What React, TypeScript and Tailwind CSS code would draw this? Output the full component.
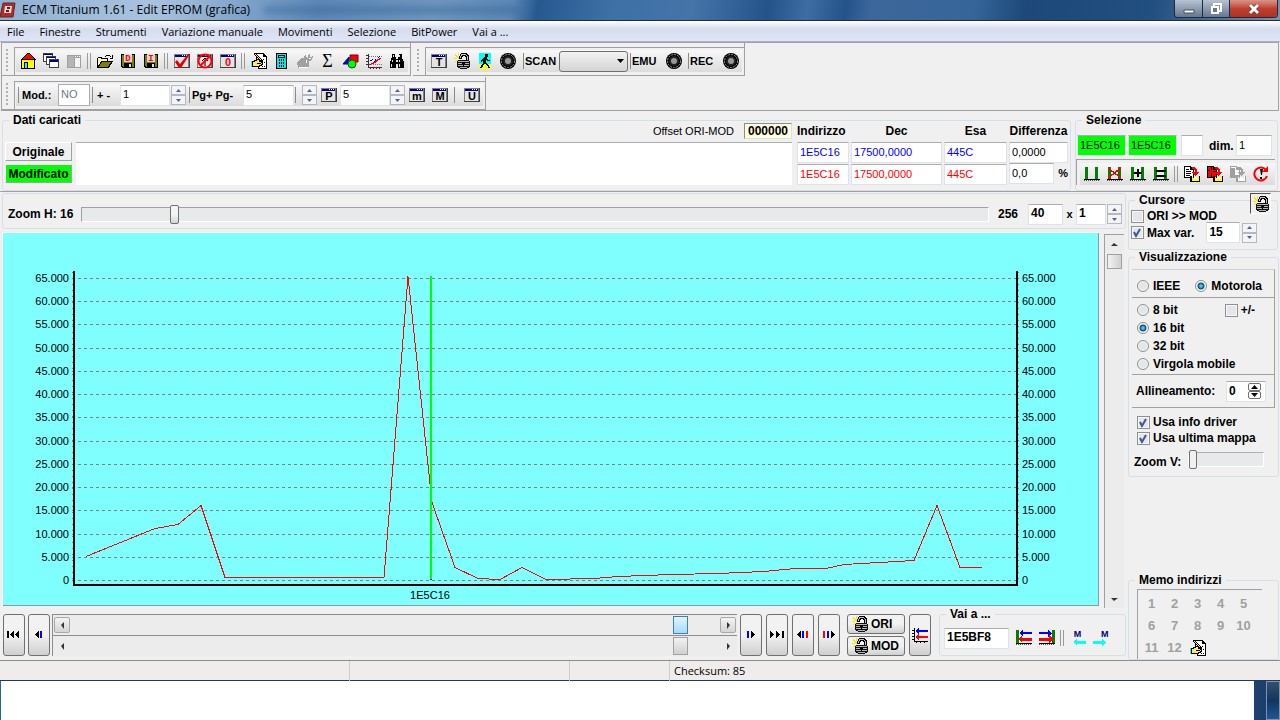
import { ReactNode } from "react";
import clsx from "clsx";

const levels = [65, 60, 55, 50, 45, 40, 35, 30, 25, 20, 15, 10, 5, 0];

const curve =
  "86,557 155,529 178,525 201,506 225,578 384,578 408,277 432,503 455,568 478,579 500,580 522,568 546,580 594,579 618,577 672,575 718,574 764,572 795,569 826,569 844,565 914,561 937,506 960,568 982,568";

const menu = [
  "File",
  "Finestre",
  "Strumenti",
  "Variazione manuale",
  "Movimenti",
  "Selezione",
  "BitPower",
  "Vai a ...",
];

/* ---------- icons ---------- */

interface IIcon {
  children: ReactNode;
  smooth?: boolean;
}

function Icon({ children, smooth }: IIcon) {
  return (
    <svg
      viewBox="0 0 16 16"
      className="block h-4 w-4 shrink-0"
      shapeRendering={smooth ? "auto" : "crispEdges"}
      aria-hidden="true"
    >
      {children}
    </svg>
  );
}

function HomeIcon() {
  return (
    <Icon>
      <path d="M1 6h14v10H1z" fill="#000" />
      <path d="M2 7h12v8H2z" fill="#ff0" />
      <path d="M7 0h3v1h1v1h1v1h1v1h1v1h1v1h1v1H1V6h1V5h1V4h1V3h1V2h1V1h1z" fill="#000" />
      <path d="M7 1h3v1h1v1h1v1h1v1h1v1H3V5h1V4h1V3h1V2h1z" fill="#f00" />
      <path d="M4 9h4v6H4z" fill="#000" />
      <path d="M5 10h2v5H5z" fill="#0ff" />
    </Icon>
  );
}

function CascadeIcon() {
  return (
    <Icon>
      {[0, 3, 6].map((d) => (
        <g key={d}>
          <path d={`M${d} ${d}h10v9h-10z`} fill="#404040" />
          <path d={`M${d + 1} ${d + 1}h8v7h-8z`} fill="#fff" />
          <path d={`M${d + 1} ${d + 1}h8v1h-8z`} fill="#000080" />
        </g>
      ))}
      <path d="M7 7h8v2H7z" fill="#000080" />
    </Icon>
  );
}

function PanelIcon() {
  return (
    <Icon>
      <path d="M1 2h14v13H1z" fill="#a0a0a0" />
      <path d="M9 5h5v9H9z" fill="#f4f4f4" />
      <path d="M9 3h1v1H9zM11 3h1v1h-1zM13 3h1v1h-1z" fill="#fff" />
      <path d="M2 3h6v11H2z" fill="#b4b4b4" />
    </Icon>
  );
}

function FolderIcon() {
  return (
    <Icon>
      <path d="M9 2h4v1H9zM8 3h1v1H8zM13 3h1v1h-1zM15 2h1v4h-3V5h2z" fill="#000" />
      <path d="M1 4h4v1h6v3H1z" fill="#000" />
      <path d="M0 5h1v10H0z" fill="#000" />
      <path d="M1 5h3v1h6v2H4l-3 5z" fill="#ffff9a" />
      <path d="M4 8h12l-4 7H0z" fill="#000" />
      <path d="M5 9h9l-3 5H2z" fill="#808000" />
    </Icon>
  );
}

function DiskIcon({ letter }: { letter: string }) {
  return (
    <Icon>
      <path d="M1 1h14v14H2l-1-1z" fill="#000" />
      <path d="M2 2h12v12H3l-1-1z" fill="#808000" />
      <path d="M4 1h8v8H4z" fill="#d8d8d8" />
      <path d="M4 10h8v5H4z" fill="#000" />
      <path d="M9 11h2v3H9z" fill="#e0e0e0" />
      <text x="8" y="8" textAnchor="middle" fill="#f00" className="font-['Liberation_Mono'] text-[9px] font-bold">
        {letter}
      </text>
    </Icon>
  );
}

function WindowFrame() {
  return (
    <>
      <path d="M0 1h16v14H0z" fill="#404040" />
      <path d="M0 1h15v13H0z" fill="#808080" />
      <path d="M1 2h13v12H1z" fill="#e4e4e4" />
      <path d="M1 2h13v2H1z" fill="#000080" />
      <path d="M8 2h1v1H8zM10 2h1v1h-1zM12 2h1v1h-1z" fill="#fff" />
    </>
  );
}

function WindowIcon({ letter, red }: { letter: string; red?: boolean }) {
  return (
    <Icon>
      <WindowFrame />
      <text
        x="8"
        y="13"
        textAnchor="middle"
        fill={red ? "#f00" : "#000"}
        className="font-['Liberation_Sans'] text-[11px] font-bold"
      >
        {letter}
      </text>
    </Icon>
  );
}

function WindowCheckIcon() {
  return (
    <Icon smooth>
      <WindowFrame />
      <path d="M1 9l2-2 3 4L14 1h2L7 15H5z" fill="#e80000" />
    </Icon>
  );
}

function WindowStopIcon() {
  return (
    <Icon smooth>
      <WindowFrame />
      <path d="M5 8l3-3 3 3M8 6v7" stroke="#000" strokeWidth="1" fill="none" />
      <circle cx="8" cy="8" r="6.5" stroke="#f00" strokeWidth="2" fill="none" />
      <path d="M3.500 12.500l9-9" stroke="#f00" strokeWidth="2" />
    </Icon>
  );
}

function NoteIcon() {
  return (
    <Icon>
      <path d="M5 0h8v1h1v1h1v1h1v13H7v-3H5z" fill="#000" />
      <path d="M6 1h6v3h3v11H8v-3H6z" fill="#fff" />
      <path d="M13 2v1h1v1h-1zM12 6h1v1h-1zM11 13h1v1h-1zM13 13h1v1h-1zM13 9h1v1h-1z" fill="#000" />
      <path d="M0 8h1v6H0z" fill="#0ff" />
      <path d="M1 8h2V7h2V6h4v1h2v2h1v3h-1v1H9v1H1z" fill="#000" />
      <path d="M2 9h2V8h2V7h2v2h2v1h1v1h-1v1H8v1H2z" fill="#ffe95a" />
      <path d="M3 0h2v1h1v1h1v1h1v1h1v1h1v1h1v1h1v2h-2V8H9V7H8V6H7V5H6V4H5V3H4V2H3z" fill="#000" />
      <path d="M4 1h1v1h1v1h1v1h1v1h1v1h1v1H9V6H8V5H7V4H6V3H5V2H4z" fill="#ff0" />
      <path d="M6 10h4v1H6z" fill="#000" />
    </Icon>
  );
}

function CalculatorIcon() {
  return (
    <Icon>
      <path d="M2 0h11v16H2z" fill="#000" />
      <path d="M3 1h9v14H3z" fill="#00e5e5" />
      <path d="M4 2h7v3H4z" fill="#000" />
      <path d="M5 3h5v1H5z" fill="#0ff" />
      <path d="M5.500 6v8M7.500 6v8M9.500 6v8" stroke="#000" strokeDasharray="2 1" />
    </Icon>
  );
}

function HandToolIcon() {
  return (
    <Icon>
      <path d="M0 9l4-4h3V3l2-2v3l2 1V2l2-1v3l3-1-1 4-3 1v5l-2 2H1z" fill="#a0a0a0" />
      <path d="M2 14h9M9 7v3M12 6l2-1" stroke="#fff" fill="none" />
    </Icon>
  );
}

function SigmaIcon() {
  return <span className="font-['Liberation_Serif',serif] text-lg leading-[22px]">Σ</span>;
}

function ShapesIcon() {
  return (
    <Icon smooth>
      <path d="M7 2h8v7H7z" fill="#f00" stroke="#800000" />
      <path d="M0 11l6-7v7z" fill="#00f" stroke="#000080" />
      <circle cx="9" cy="11" r="4" fill="#0f0" stroke="#006000" />
    </Icon>
  );
}

function PlotIcon() {
  return (
    <Icon>
      <path
        d="M2 1h1v13h13v1H2zM0 2h2v1H0zM0 5h2v1H0zM0 8h2v1H0zM0 11h2v1H0zM4 15h1v1H4zM7 15h1v1H7zM10 15h1v1h-1zM13 15h1v1h-1z"
        fill="#333"
      />
      <path d="M3 3.500h13M3 11.500h13" stroke="#777" strokeDasharray="1 1" />
      <path d="M3 11h2v-1h2V9h2V8h1V7h1V6h2V5h2v1h-1v1h-2v1h-1v1h-1v1H8v1H5v1H3z" fill="#f00" />
      <path d="M4 7h2V6h1v1H6v1H4zM8 8h1V6h1v2H9v1H8zM12 4h1V3h1v1h-1v1h-1z" fill="#00f" />
    </Icon>
  );
}

function BinocularsIcon() {
  return (
    <Icon>
      <path d="M3 1h3v3h1v2h2V4h1V1h3v3l1 3 1 2v6H9v-4H7v4H1V9l1-2 1-3z" fill="#000" />
      <path d="M4 2h1v2H4zM10 2h1v2h-1zM3 7h1v2H3zM10 7h1v2h-1zM2 11h1v3H2zM10 11h1v3h-1zM7 7h2v2H7z" fill="#ddd" />
    </Icon>
  );
}

function LockIcon() {
  return (
    <Icon>
      <path
        d="M4 0h1v3H4zM1 1h1v1h1v1h1v1h1v1h1v1H4V5H3V4H2V3H1zM0 5h3v1H0zM3 7h1v1H2v1H1V8h1V7z"
        fill="#f0e800"
      />
      <path d="M6 1h1V0h6v1h1v1h1v6h-3V4h-1V3H9v1H8v2H5V3h1z" fill="#000" />
      <path d="M7 2V1h5v1h1v1h1v5h-1V3h-1V2H8v1H7v2H6V3h1z" fill="#c0c0c0" />
      <path d="M3 8h1V7h11v1h1v6h-1v1h-2v1H6v-1H4v-1H3z" fill="#111" />
      <path d="M4 8h11v1H4zM4 10h11v1H4zM4 12h11v1H4zM6 14h7v1H6z" fill="#b4b4b4" />
      <path d="M8 9h3v2h-1v3H9v-3H8z" fill="#000" />
    </Icon>
  );
}

function WalkIcon() {
  return (
    <svg viewBox="0 0 16 16" className="block h-4 w-4" shapeRendering="crispEdges" aria-hidden="true">
      <path d="M2 0h12v11H2z" fill="#0ff" />
      <path d="M2 11h12v5H2z" fill="#ff0" />
      <path
        d="M8 1h3v3h-1v2h1v1h2v1h-3V7H9v3h1v1h1v1h1v2h1v1h-2v-2h-1v-1H9v-1H7v1H6v2H5v1H3v-1h1v-2h1v-1h1V8H5v1H4V7h1V6h1V5h1V4h1z"
        fill="#000"
      />
    </svg>
  );
}

function RecordIcon() {
  return (
    <Icon smooth>
      <circle cx="8" cy="8" r="8" fill="#000" />
      <circle cx="8" cy="8" r="6.500" fill="none" stroke="#999" strokeDasharray="2 1" />
      <circle cx="8" cy="8" r="5" fill="#222" />
      <circle cx="8" cy="8" r="3" fill="#999" />
    </Icon>
  );
}

function MarkIcon({ kind }: { kind?: "cut" | "plus" | "equal" }) {
  return (
    <Icon>
      <path d="M1 1h3v12H1zM11 1h3v12h-3z" fill="#008000" />
      <path d="M0 13h16v1H0z" fill="#000" />
      <path d="M0 14.500h16" stroke="#555" strokeDasharray="1 1" />
      {kind === "cut" && <path d="M1 2l13 10M14 2L1 12" stroke="#f00" strokeWidth="1.500" />}
      {kind === "plus" && <path d="M4 7h8M8 3v8" stroke="#000" strokeWidth="2" />}
      {kind === "equal" && <path d="M3 5h10M3 10h10" stroke="#000" strokeWidth="2" />}
    </Icon>
  );
}

function PasteIcon({ tone }: { tone: "white" | "red" | "gray" }) {
  const line = tone === "gray" ? "#a0a0a0" : "#000";
  const arrow = tone === "gray" ? "#a0a0a0" : "#f00";
  return (
    <Icon>
      <path d="M0 0h7v1h1v1h1v1h1v9H0z" fill={line} />
      <path d="M1 1h5v3h3v7H1z" fill={tone === "red" ? "#f00" : "#fff"} />
      {tone === "white" && <path d="M2 3h3v1H2zM2 5h5v1H2zM2 7h5v1H2zM2 9h4v1H2z" fill="#000" />}
      {tone === "gray" && <path d="M2 2h3v7h4v2H1V2z" fill="#a0a0a0" />}
      {tone === "red" && <path d="M1 4h2v1H1zM4 1h1v3H4zM6 5h3v1H6zM4 7h1v4H4z" fill="#000" />}
      <path d="M8 1h3v1h1v1h1v3h2v1h-1v1h-1v1h-1v1h-1V9h-1V8H9V7H8V6h3V4h-1V3H8z" fill={arrow} />
      <path d="M6 10h2v5h8v1H6zM15 10h1v5h-1z" fill={line} />
      <path d="M8 11h1v4H8zM9 13h6v2H9zM14 10h1v3h-1z" fill={tone === "gray" ? "#fff" : "#ff0"} />
      <path d="M10 11h3v2h-3z" fill="#fff" />
    </Icon>
  );
}

function ReloadIcon() {
  return (
    <Icon smooth>
      <path d="M13 4a6.500 6.500 0 1 0 1 6" stroke="#f00" strokeWidth="2" fill="none" />
      <path d="M9 6h6V0z" fill="#f00" />
      <path d="M7 3h3l-1 6H8zM7 11h2v2H7z" fill="#000" />
    </Icon>
  );
}

function PlotArrowsIcon() {
  return (
    <Icon>
      <path d="M2 1v13M0 3h2M0 6h2M0 9h2M0 12h2M4 14v2M8 14v2M12 14v2M2 14h14" stroke="#000" fill="none" />
      <path d="M3 4l4-4v3h9v2H7v3z" fill="#00f" />
      <path d="M3 10l4-4v3h9v2H7v3z" fill="#f00" />
    </Icon>
  );
}

function JumpIcon({ right }: { right?: boolean }) {
  return (
    <Icon>
      <path d={right ? "M13 0h3v13h-3z" : "M0 0h3v13H0z"} fill="#008000" />
      <path d="M0 13h16v1H0z" fill="#000" />
      <path d="M0 14.500h16" stroke="#555" strokeDasharray="1 1" />
      <path d={right ? "M13 3L9 0v2H0v2h9v3z" : "M3 3l4-3v2h9v2H7v3z"} fill="#00f" />
      <path d={right ? "M14 9l-4-4v3H0v3h10v2z" : "M2 9l4-4v3h10v3H6v2z"} fill="#f00" />
    </Icon>
  );
}

function MemoryArrowIcon({ right }: { right?: boolean }) {
  return (
    <span
      className={clsx(
        "flex w-4 flex-col font-['Liberation_Sans',sans-serif] text-[9px] leading-[9px] font-bold text-[#000080]",
        right && "items-end"
      )}
    >
      M
      <svg viewBox="0 0 16 7" className="block h-[7px] w-4" shapeRendering="crispEdges" aria-hidden="true">
        <path d={right ? "M13 3L9 0v2H0v3h9v2z" : "M3 3l4-3v2h9v3H7v2z"} fill="#0ff" />
      </svg>
    </span>
  );
}

/* ---------- building blocks ---------- */

function ToolButton({ label, children }: { label: string; children: ReactNode }) {
  return (
    <button aria-label={label} className="flex h-[22px] w-[23px] shrink-0 items-center justify-center">
      {children}
    </button>
  );
}

function DoubleSep() {
  return <span className="mx-0.5 h-4 w-1 shrink-0 border-x border-[#9a9a9a]" />;
}

function Sep() {
  return <span className="h-4 w-px shrink-0 bg-[#8a8a8a]" />;
}

interface IToolbar {
  children: ReactNode;
}

function Toolbar({ children }: IToolbar) {
  return (
    <div className="flex h-[33px] shrink-0 items-center border-r border-b border-[#a0a0a0] pt-1 pl-1">
      <span className="mr-1.5 h-6 w-0.5 bg-[repeating-linear-gradient(#b0b0b0_0_2px,transparent_2px_4px)]" />
      <div className="h-full border-t border-l border-[#a0a0a0] pt-0.5 pr-0.5 pl-px">
        <div className="flex h-[22px] items-center bg-linear-to-b from-[#f8f8f8] to-[#dcdcdc]">{children}</div>
      </div>
    </div>
  );
}

interface ITextBox {
  label: string;
  value: string;
  className?: string;
}

function TextBox({ label, value, className }: ITextBox) {
  return (
    <input
      aria-label={label}
      defaultValue={value}
      className={clsx(
        "h-[21px] min-w-0 border border-[#dde3ea] border-t-[#abadb3] pr-0 pb-0.5 pl-0.5 outline-none",
        className
      )}
    />
  );
}

function Spinner({ label }: { label: string }) {
  return (
    <span className="flex h-5 w-[15px] shrink-0 flex-col">
      <button
        aria-label={`${label} su`}
        className="flex h-2.5 items-center justify-center border border-[#b4b8c4] bg-[#f4f4f4]"
      >
        <svg viewBox="0 0 5 3" className="h-[3px] w-[5px]" aria-hidden="true">
          <path d="M0 3h5L2.500 0z" fill="#4a62a8" />
        </svg>
      </button>
      <button
        aria-label={`${label} giù`}
        className="flex h-2.5 items-center justify-center border border-[#b4b8c4] bg-[#f4f4f4]"
      >
        <svg viewBox="0 0 5 3" className="h-[3px] w-[5px]" aria-hidden="true">
          <path d="M0 0h5L2.500 3z" fill="#4a62a8" />
        </svg>
      </button>
    </span>
  );
}

interface IGroup {
  title: string;
  className?: string;
  children: ReactNode;
}

function Group({ title, className, children }: IGroup) {
  return (
    <fieldset className={clsx("min-w-0 rounded-[3px] border border-[#d5dfe5]", className)}>
      <legend className="ml-1.5 px-1 text-xs leading-[14px] font-bold">{title}</legend>
      {children}
    </fieldset>
  );
}

function CheckBox({ label, checked }: { label: string; checked?: boolean }) {
  return (
    <label className="flex items-center gap-[3px] text-xs leading-4 font-bold">
      <span className="grid h-[13px] w-[13px] shrink-0">
        <input
          type="checkbox"
          defaultChecked={checked}
          className="peer col-start-1 row-start-1 h-[13px] w-[13px] appearance-none border border-[#8e8f8f] bg-[#e4e7ea] shadow-[inset_0_0_0_1px_#f8f8f8]"
        />
        <svg
          viewBox="0 0 13 13"
          className="pointer-events-none invisible col-start-1 row-start-1 h-[13px] w-[13px] peer-checked:visible"
          aria-hidden="true"
        >
          <path d="M3 6l2 4 4-7" stroke="#3c5596" strokeWidth="2" fill="none" />
        </svg>
      </span>
      {label}
    </label>
  );
}

interface IRadio {
  name: string;
  label: string;
  checked?: boolean;
}

function Radio({ name, label, checked }: IRadio) {
  return (
    <label className="flex items-center gap-1 text-xs leading-[18px] font-bold">
      <input
        type="radio"
        name={name}
        defaultChecked={checked}
        className="h-3 w-3 shrink-0 appearance-none rounded-full border border-[#8e8f8f] bg-[#e4e7ea] shadow-[inset_0_0_0_1px_#f8f8f8] checked:bg-[radial-gradient(circle,#4fc3f0_0_1px,#0d4468_3px,#f4f4f4_4px)]"
      />
      {label}
    </label>
  );
}

function SideButton({ label, children }: { label: string; children: ReactNode }) {
  return (
    <button
      aria-label={label}
      className="flex h-[42px] w-[22px] shrink-0 items-center justify-center rounded-[3px] border border-[#707070] bg-linear-to-b from-[#f2f2f2] from-50% to-[#cfcfcf]"
    >
      <svg viewBox="0 0 14 8" className="h-2 w-3.5" shapeRendering="crispEdges" aria-hidden="true">
        {children}
      </svg>
    </button>
  );
}

function ScrollArrow({ d, label, boxed }: { d: string; label: string; boxed?: boolean }) {
  return (
    <button
      aria-label={label}
      className={clsx(
        "flex h-4 w-4 shrink-0 items-center justify-center",
        boxed && "rounded-[2px] border border-[#a8a8a8] bg-linear-to-b from-[#f4f4f4] to-[#d4d4d4]"
      )}
    >
      <svg viewBox="0 0 7 7" className="h-[7px] w-[7px]" aria-hidden="true">
        <path d={d} fill="#333" />
      </svg>
    </button>
  );
}

function HorizontalScroll({ active }: { active?: boolean }) {
  return (
    <div className="flex h-[21px] items-center border-t border-l border-[#8c8c8c] bg-[#ececec] px-px">
      <ScrollArrow label="Scorri a sinistra" d="M5 0v7L2 3z" boxed={active} />
      <span className="flex-1" />
      <button
        aria-label="Posizione"
        className={clsx(
          "h-[18px] w-[15px] border",
          active
            ? "border-[#3c7fb1] bg-linear-to-b from-[#e0f3fd] to-[#a4dcf8]"
            : "border-[#a0a0a0] bg-linear-to-b from-[#f2f2f2] to-[#d0d0d0]"
        )}
      />
      <span className="w-8" />
      <ScrollArrow label="Scorri a destra" d="M2 0v7l3-4z" boxed={active} />
    </div>
  );
}

/* ---------- page sections ---------- */

function TitleBar() {
  return (
    <header className="flex h-[21px] shrink-0 justify-between border-b border-[#1c2d48] bg-[linear-gradient(100deg,#8fb0d3_0%,#a9c3de_12%,#7fa3ca_19%,#5c87b6_25%,#6f96bf_34%,#5b87b6_40%,#27588f_42%,#3f70a6_48%,#4474a8_54%,#24538a_60%,#3d6da2_63%,#24538a_66%,#3d679b_68%,#36659a_76%,#1d4879_80%,#214f80_90%,#7792ae_100%)] font-['Open_Sans',sans-serif]">
      <div className="flex items-center gap-1.5">
        <svg viewBox="0 0 16 16" className="h-4 w-4" aria-hidden="true">
          <path d="M3 1h12l-2 14H0z" fill="#b82a1e" stroke="#5a2a2a" />
          <path d="M5 4h7l-1 7H4z" fill="#ddd" />
          <path d="M7 6h3M6 9h3" stroke="#7a1010" strokeWidth="2" />
        </svg>
        <h1 className="text-xs leading-5 text-black">ECM Titanium 1.61 - Edit EPROM (grafica)</h1>
        <span className="ml-2 h-2 w-64 bg-[#315f92] opacity-40 blur-[3px]" />
      </div>
      <div className="mr-0.5 flex h-[18px] overflow-hidden rounded-b border border-t-0 border-[#1d2b40]">
        <button
          aria-label="Riduci a icona"
          className="flex w-7 items-center justify-center border-r border-[#1d2b40] bg-linear-to-b from-[#b7c3d2] to-[#66788f]"
        >
          <svg viewBox="0 0 12 10" className="h-2.5 w-3" aria-hidden="true">
            <path d="M1 6h10v3H1z" fill="#fff" stroke="#444f60" />
          </svg>
        </button>
        <button
          aria-label="Ripristina"
          className="flex w-[27px] items-center justify-center border-r border-[#1d2b40] bg-linear-to-b from-[#b7c3d2] to-[#66788f]"
        >
          <svg viewBox="0 0 12 12" className="h-3 w-3" aria-hidden="true">
            <path d="M4 1h7v7H4z" fill="#8795a8" stroke="#fff" strokeWidth="2" />
            <path d="M2 4h6v6H2z" fill="#66788f" stroke="#fff" strokeWidth="2" />
          </svg>
        </button>
        <button
          aria-label="Chiudi"
          className="flex w-[47px] items-center justify-center bg-linear-to-b from-[#d9948a] via-[#c04030] to-[#b03020]"
        >
          <svg viewBox="0 0 12 10" className="h-2.5 w-3" aria-hidden="true">
            <path d="M2 1l8 8M10 1L2 9" stroke="#4a2020" strokeWidth="4" />
            <path d="M2 1l8 8M10 1L2 9" stroke="#fff" strokeWidth="3" />
          </svg>
        </button>
      </div>
    </header>
  );
}

function MenuBar() {
  return (
    <nav className="flex h-[21px] shrink-0 gap-px border-b border-[#a9b4cc] bg-linear-to-b from-white via-[#d5dcee] via-40% to-[#e0e6f6] font-['Open_Sans',sans-serif] text-[11px]">
      {menu.map((item) => (
        <button key={item} className="px-[7px] leading-[22px]">
          {item}
        </button>
      ))}
    </nav>
  );
}

function Toolbars() {
  return (
    <div className="mx-px flex shrink-0 flex-col gap-px border border-[#a0a0a0] bg-[#f0f0f0]">
      <div className="flex gap-0.5">
        <Toolbar>
          <ToolButton label="Inizio"><HomeIcon /></ToolButton>
          <ToolButton label="Finestre"><CascadeIcon /></ToolButton>
          <ToolButton label="Pannello"><PanelIcon /></ToolButton>
          <DoubleSep />
          <ToolButton label="Apri"><FolderIcon /></ToolButton>
          <ToolButton label="Salva driver"><DiskIcon letter="D" /></ToolButton>
          <ToolButton label="Salva immagine"><DiskIcon letter="I" /></ToolButton>
          <DoubleSep />
          <ToolButton label="Verifica"><WindowCheckIcon /></ToolButton>
          <ToolButton label="Annulla"><WindowStopIcon /></ToolButton>
          <ToolButton label="Azzera"><WindowIcon letter="0" red /></ToolButton>
          <DoubleSep />
          <ToolButton label="Note"><NoteIcon /></ToolButton>
          <ToolButton label="Calcolatrice"><CalculatorIcon /></ToolButton>
          <ToolButton label="Utensili"><HandToolIcon /></ToolButton>
          <ToolButton label="Checksum"><SigmaIcon /></ToolButton>
          <ToolButton label="Forme"><ShapesIcon /></ToolButton>
          <ToolButton label="Grafico"><PlotIcon /></ToolButton>
          <ToolButton label="Cerca"><BinocularsIcon /></ToolButton>
        </Toolbar>
        <Toolbar>
          <ToolButton label="Testo"><WindowIcon letter="T" /></ToolButton>
          <ToolButton label="Blocca"><LockIcon /></ToolButton>
          <ToolButton label="Avvia"><WalkIcon /></ToolButton>
          <ToolButton label="Stato"><RecordIcon /></ToolButton>
          <span className="w-1" />
          <Sep />
          <label htmlFor="scan" className="w-[35px] pl-px font-bold">SCAN</label>
          <span className="grid w-[69px] items-center">
            <select
              id="scan"
              className="col-start-1 row-start-1 h-[21px] w-full appearance-none rounded-[3px] border border-[#707070] bg-linear-to-b from-[#f2f2f2] to-[#d4d4d4]"
            >
              <option value=""></option>
            </select>
            <svg
              viewBox="0 0 7 4"
              className="pointer-events-none col-start-1 row-start-1 mr-1 h-1 w-[7px] justify-self-end"
              aria-hidden="true"
            >
              <path d="M0 0h7L3.500 4z" fill="#000" />
            </svg>
          </span>
          <span className="w-0.5" />
          <Sep />
          <span className="w-[31px] pl-px font-bold">EMU</span>
          <ToolButton label="Emulatore"><RecordIcon /></ToolButton>
          <span className="w-[3px]" />
          <Sep />
          <span className="w-[30px] pl-px font-bold">REC</span>
          <ToolButton label="Registra"><RecordIcon /></ToolButton>
        </Toolbar>
      </div>
      <div className="flex">
        <Toolbar>
          <span className="w-0.5" />
          <Sep />
          <label className="flex items-center font-bold">
            <span className="w-[39px] pl-[3px]">Mod.:</span>
            <input
              disabled
              value="NO"
              className="h-[22px] w-8 border border-[#abadb3] bg-white pb-0.5 pl-0.5 font-normal text-[#6d7a90]"
            />
          </label>
          <span className="w-0.5" />
          <Sep />
          <span className="w-[27px] pl-1 font-bold">+ -</span>
          <TextBox label="Variazione" value="1" className="w-[50px] bg-white" />
          <span className="w-px" />
          <Spinner label="Variazione" />
          <span className="w-[3px]" />
          <Sep />
          <span className="w-[53px] pl-0.5 font-bold">Pg+ Pg-</span>
          <TextBox label="Pagina" value="5" className="w-[51px] bg-white" />
          <span className="w-px" />
          <Sep />
          <span className="w-1.5" />
          <Spinner label="Pagina" />
          <ToolButton label="Passo"><WindowIcon letter="P" /></ToolButton>
          <TextBox label="Passo" value="5" className="w-[50px] bg-white" />
          <Spinner label="Passo" />
          <ToolButton label="Minimo"><WindowIcon letter="m" /></ToolButton>
          <ToolButton label="Massimo"><WindowIcon letter="M" /></ToolButton>
          <span className="w-[3px]" />
          <Sep />
          <span className="w-[5px]" />
          <ToolButton label="Ultimo"><WindowIcon letter="U" /></ToolButton>
        </Toolbar>
      </div>
    </div>
  );
}

function LoadedData() {
  return (
    <Group title="Dati caricati" className="h-[78px] flex-1">
      <div className="-mt-1 grid grid-cols-[67px_1fr_52px_91px_63px_59px] grid-rows-[16px_21px_21px] gap-x-0.5 gap-y-px px-0.5">
        <div className="col-span-2 flex items-center justify-end gap-2.5 pr-[3px]">
          Offset ORI-MOD
          <output className="w-12 border border-[#e0e0d0] border-t-[#8c8c8c] border-l-[#8c8c8c] bg-[#ffffe1] text-center text-xs leading-[14px] font-bold">
            000000
          </output>
        </div>
        <span className="text-xs font-bold">Indirizzo</span>
        <span className="text-center text-xs font-bold">Dec</span>
        <span className="text-center text-xs font-bold">Esa</span>
        <span className="text-center text-xs font-bold">Differenza</span>

        <button className="mt-0.5 border border-white border-r-[#a0a0a0] border-b-[#a0a0a0] text-xs font-bold">
          Originale
        </button>
        <textarea
          aria-label="Descrizione"
          className="row-span-2 mt-0.5 mr-[3px] ml-0.5 block h-[43px] resize-none border-t border-[#abadb3] bg-white"
        />
        <TextBox label="Indirizzo originale" value="1E5C16" className="mt-0.5 bg-white text-[#0000ff]" />
        <TextBox label="Dec originale" value="17500,0000" className="mt-0.5 bg-white text-[#0000ff]" />
        <TextBox label="Esa originale" value="445C" className="mt-0.5 bg-white text-[#0000ff]" />
        <TextBox label="Differenza" value="0,0000" className="mt-0.5 bg-white" />

        <button className="mt-0.5 border border-white border-r-[#a0a0a0] border-b-[#a0a0a0] bg-[#00ff00] text-xs font-bold">
          Modificato
        </button>
        <TextBox label="Indirizzo modificato" value="1E5C16" className="mt-0.5 bg-white text-[#ff0000]" />
        <TextBox label="Dec modificato" value="17500,0000" className="mt-0.5 bg-white text-[#ff0000]" />
        <TextBox label="Esa modificato" value="445C" className="mt-0.5 bg-white text-[#ff0000]" />
        <div className="mt-0.5 flex items-center justify-between font-bold">
          <TextBox label="Differenza percentuale" value="0,0" className="w-[45px] bg-white font-normal" />
          %
        </div>
      </div>
    </Group>
  );
}

function Selection() {
  return (
    <Group title="Selezione" className="h-[78px] w-[203px] shrink-0">
      <div className="mt-2 flex items-center pl-px">
        <TextBox label="Inizio selezione" value="1E5C16" className="w-[49px] bg-[#00ff00]" />
        <TextBox label="Fine selezione" value="1E5C16" className="ml-0.5 w-[49px] bg-[#00ff00]" />
        <TextBox label="Modo" value="" className="ml-1 w-[22px] bg-white" />
        <label htmlFor="dim" className="ml-1.5 w-[27px] text-xs font-bold">dim.</label>
        <input
          id="dim"
          defaultValue="1"
          className="h-[21px] w-9 border border-[#dde3ea] border-t-[#abadb3] bg-white pb-0.5 pl-0.5"
        />
      </div>
      <div className="mt-[3px] mr-0.5 border-t border-l border-[#a0a0a0] pt-[3px] pl-[3px]">
        <div className="flex h-[22px] items-center bg-linear-to-b from-[#f8f8f8] to-[#dcdcdc]">
          <ToolButton label="Seleziona"><MarkIcon /></ToolButton>
          <ToolButton label="Deseleziona"><MarkIcon kind="cut" /></ToolButton>
          <ToolButton label="Aggiungi"><MarkIcon kind="plus" /></ToolButton>
          <ToolButton label="Uguale"><MarkIcon kind="equal" /></ToolButton>
          <DoubleSep />
          <ToolButton label="Copia"><PasteIcon tone="white" /></ToolButton>
          <ToolButton label="Copia modifiche"><PasteIcon tone="red" /></ToolButton>
          <ToolButton label="Incolla"><PasteIcon tone="gray" /></ToolButton>
          <ToolButton label="Ripristina"><ReloadIcon /></ToolButton>
        </div>
      </div>
    </Group>
  );
}

function ZoomBar() {
  return (
    <div className="flex h-9 shrink-0 items-center rounded-[3px] border border-[#d5dfe5] pt-1.5 pr-[3px] pl-[5px] font-bold">
      <label htmlFor="zoomh" className="w-[73px] text-xs">Zoom H: 16</label>
      <input
        id="zoomh"
        type="range"
        min="0"
        max="256"
        defaultValue="25"
        className="h-[18px] min-w-0 flex-1 appearance-none [&::-webkit-slider-runnable-track]:h-[15px] [&::-webkit-slider-runnable-track]:border [&::-webkit-slider-runnable-track]:border-white [&::-webkit-slider-runnable-track]:border-t-[#a0a0a0] [&::-webkit-slider-runnable-track]:border-l-[#a0a0a0] [&::-webkit-slider-runnable-track]:bg-[#e7eaea] [&::-webkit-slider-thumb]:-mt-[3px] [&::-webkit-slider-thumb]:h-[19px] [&::-webkit-slider-thumb]:w-[9px] [&::-webkit-slider-thumb]:appearance-none [&::-webkit-slider-thumb]:rounded-[2px] [&::-webkit-slider-thumb]:border [&::-webkit-slider-thumb]:border-[#707070] [&::-webkit-slider-thumb]:bg-[linear-gradient(#f4f4f4_50%,#d4d4d4)]"
      />
      <span className="mr-2.5 ml-[9px] text-xs">256</span>
      <TextBox label="Campioni" value="40" className="w-[35px] bg-white text-xs" />
      <span className="w-[13px] text-center">x</span>
      <TextBox label="Moltiplicatore" value="1" className="mr-px w-[30px] bg-white text-xs" />
      <Spinner label="Moltiplicatore" />
    </div>
  );
}

function Chart() {
  return (
    <svg
      viewBox="3 235 1095 369"
      className="block h-full w-full border-r border-b border-[#8c9c9c] bg-[#80ffff]"
      role="img"
      aria-label="Grafico EPROM"
    >
      <g shapeRendering="crispEdges">
        {levels.map((level) => {
          const y = Math.round(580 - (level * 302) / 65);
          return (
            <path
              key={level}
              d={`M72 ${y}.5H1020`}
              stroke="#808080"
              strokeDasharray="3 3"
            />
          );
        })}
        <path d="M72.500 272V584M1018.500 272V584" stroke="#808080" strokeDasharray="1 5" />
        <path d="M74 271V585H1017V271" stroke="#000" strokeWidth="2" fill="none" />
        <polyline points={curve} stroke="#ff0000" fill="none" />
        <path d="M431 276V579" stroke="#00ff00" strokeWidth="2" />
        <path d="M430 579h2v1h-2z" fill="#0000ff" />
      </g>
      <g className="font-['Liberation_Sans'] text-[11px]" fill="#000">
        {levels.map((level) => {
          const y = Math.round(580 - (level * 302) / 65) + 4;
          const text = level ? `${level}.000` : "0";
          return (
            <g key={level}>
              <text x="69" y={y} textAnchor="end">
                {text}
              </text>
              <text x="1022" y={y}>
                {text}
              </text>
            </g>
          );
        })}
        <text x="430" y="599" textAnchor="middle">
          1E5C16
        </text>
      </g>
    </svg>
  );
}

function ChartArea() {
  return (
    <div className="flex min-h-0 flex-1 gap-[5px] pr-0.5">
      <div className="min-h-0 min-w-0 flex-1 border-t border-l border-white">
        <Chart />
      </div>
      <div className="mt-0.5 -mb-0.5 flex w-5 flex-col items-center border-t border-l border-[#a0a0a0] bg-[#ececec] py-px">
        <ScrollArrow label="Scorri in alto" d="M0 5h7L3 2z" />
        <button
          aria-label="Posizione verticale"
          className="mt-0.5 h-[15px] w-[15px] border border-[#a0a0a0] bg-linear-to-r from-[#f2f2f2] to-[#d0d0d0]"
        />
        <span className="flex-1" />
        <ScrollArrow label="Scorri in basso" d="M0 2h7L3 5z" />
      </div>
    </div>
  );
}

function LockButton({ label }: { label: string }) {
  return (
    <button className="flex h-5 w-[58px] items-center gap-[3px] rounded-[3px] border border-[#707070] bg-linear-to-b from-[#f2f2f2] from-50% to-[#cfcfcf] pl-1 text-xs font-bold">
      <LockIcon />
      {label}
    </button>
  );
}

function Navigation() {
  return (
    <div className="mt-1 flex h-[50px] shrink-0 items-end pb-1">
      <div className="ml-px flex gap-[3px]">
        <SideButton label="Primo">
          <path d="M0 0h2v7H0zM7 0v7L3 4V3zM12 0v7L8 4V3z" fill="#000" />
        </SideButton>
        <SideButton label="Indietro">
          <path d="M7 0v7L3 4V3z" fill="#000" />
          <path d="M8 0h2v7H8z" fill="#00f" />
        </SideButton>
      </div>
      <div className="mr-[3px] ml-0.5 flex flex-1 flex-col">
        <HorizontalScroll active />
        <HorizontalScroll />
      </div>
      <div className="flex gap-1">
        <SideButton label="Avanti">
          <path d="M3 0h2v7H3z" fill="#00f" />
          <path d="M7 0v7l4-3V3z" fill="#000" />
        </SideButton>
        <SideButton label="Ultimo">
          <path d="M0 0v7l4-3V3zM6 0v7l4-3V3zM12 0h2v7h-2z" fill="#000" />
        </SideButton>
        <SideButton label="Differenza precedente">
          <path d="M5 0v7L1 4V3z" fill="#000" />
          <path d="M6 0h2v7H6z" fill="#00f" />
          <path d="M10 0h2v7h-2z" fill="#f00" />
        </SideButton>
        <SideButton label="Differenza successiva">
          <path d="M1 0h2v7H1z" fill="#f00" />
          <path d="M5 0h2v7H5z" fill="#00f" />
          <path d="M9 0v7l4-3V3z" fill="#000" />
        </SideButton>
      </div>
      <div className="mr-1 ml-[7px] flex flex-col gap-0.5">
        <LockButton label="ORI" />
        <LockButton label="MOD" />
      </div>
      <button
        aria-label="Sincronizza"
        className="flex h-[42px] w-[22px] items-center justify-center rounded-[3px] border border-[#707070] bg-linear-to-b from-[#f2f2f2] from-50% to-[#cfcfcf]"
      >
        <PlotArrowsIcon />
      </button>
      <Group title="Vai a ..." className="ml-2 h-[49px] w-[187px]">
        <div className="mt-1.5 flex items-center pl-1">
          <TextBox label="Indirizzo di destinazione" value="1E5BF8" className="mr-[3px] w-[65px] bg-white text-xs font-bold" />
          <ToolButton label="Salta indietro"><JumpIcon /></ToolButton>
          <ToolButton label="Salta avanti"><JumpIcon right /></ToolButton>
          <DoubleSep />
          <ToolButton label="Memoria precedente"><MemoryArrowIcon /></ToolButton>
          <ToolButton label="Memoria successiva"><MemoryArrowIcon right /></ToolButton>
        </div>
      </Group>
    </div>
  );
}

function SidePanel() {
  return (
    <aside className="flex w-[152px] shrink-0 flex-col pr-px">
      <div className="flex">
        <Group title="Cursore" className="h-[57px] flex-1">
          <div className="pt-px pl-0.5">
            <CheckBox label="ORI >> MOD" />
            <div className="-mt-0.5 flex items-center">
              <CheckBox label="Max var." checked />
              <TextBox label="Variazione massima" value="15" className="mr-0.5 ml-3 w-[34px] bg-white text-xs font-bold" />
              <Spinner label="Variazione massima" />
            </div>
          </div>
        </Group>
        <button
          aria-label="Blocca cursore"
          className="-ml-7 mr-2 flex h-[21px] w-[21px] items-center justify-center border border-white border-t-[#505050] border-l-[#505050] bg-[#f0f0f0]"
        >
          <LockIcon />
        </button>
      </div>

      <Group title="Visualizzazione" className="pb-1.5">
        <div className="mx-[3px] mt-[5px] border-t border-r border-[#d0d0d0] border-r-[#a0a0a0]">
          <div className="flex h-[28px] items-center gap-[15px] border-b border-[#a0a0a0] pt-1 pl-[5px]">
            <Radio name="formato" label="IEEE" />
            <Radio name="formato" label="Motorola" checked />
          </div>
          <div className="border-b border-[#a0a0a0] py-px pl-[5px]">
            <div className="flex justify-between pt-0.5 pr-[19px]">
              <Radio name="bit" label="8 bit" />
              <CheckBox label="+/-" />
            </div>
            <Radio name="bit" label="16 bit" checked />
            <Radio name="bit" label="32 bit" />
            <Radio name="bit" label="Virgola mobile" />
          </div>
          <div className="flex h-[33px] items-center justify-between border-b border-[#a0a0a0] pr-2 pl-1">
            <label htmlFor="align" className="text-xs font-bold">Allineamento:</label>
            <span className="flex h-[21px] w-10 items-center justify-between border border-[#dde3ea] border-t-[#abadb3] bg-white pr-1">
              <input id="align" defaultValue="0" className="w-4 pl-0.5 text-xs font-bold" />
              <span className="flex flex-col">
                <button aria-label="Aumenta" className="rounded-[2px] border border-[#707070] px-0.5">
                  <svg viewBox="0 0 7 6" className="h-1.5 w-[7px]" aria-hidden="true">
                    <path d="M0 5h7L3.500 1z" />
                  </svg>
                </button>
                <button aria-label="Diminuisci" className="rounded-[2px] border border-[#707070] px-0.5">
                  <svg viewBox="0 0 7 6" className="h-1.5 w-[7px]" aria-hidden="true">
                    <path d="M0 1h7L3.500 5z" />
                  </svg>
                </button>
              </span>
            </span>
          </div>
        </div>
        <div className="pt-1.5 pl-2">
          <CheckBox label="Usa info driver" checked />
          <CheckBox label="Usa ultima mappa" checked />
        </div>
        <div className="mt-0.5 flex items-center pl-[5px]">
          <label htmlFor="zoomv" className="w-[54px] pt-1.5 text-xs font-bold">Zoom V:</label>
          <input
            id="zoomv"
            type="range"
            defaultValue="0"
            className="h-5 w-[76px] appearance-none [&::-webkit-slider-runnable-track]:h-[15px] [&::-webkit-slider-runnable-track]:border [&::-webkit-slider-runnable-track]:border-white [&::-webkit-slider-runnable-track]:border-t-[#b0b0b0] [&::-webkit-slider-runnable-track]:bg-[#e7eaea] [&::-webkit-slider-thumb]:-mt-[3px] [&::-webkit-slider-thumb]:h-[19px] [&::-webkit-slider-thumb]:w-2 [&::-webkit-slider-thumb]:appearance-none [&::-webkit-slider-thumb]:rounded-[2px] [&::-webkit-slider-thumb]:border [&::-webkit-slider-thumb]:border-[#707070] [&::-webkit-slider-thumb]:bg-[#f0f0f0]"
          />
        </div>
      </Group>

      <Group title="Memo indirizzi" className="mt-auto h-[87px]">
        <div className="mt-0.5 mr-4 ml-2 grid grid-cols-[repeat(5,23px)] grid-rows-[repeat(3,22px)] border-t border-l border-[#a0a0a0] pt-[3px] pl-0.5">
          {Array.from({ length: 12 }, (_, i) => (
            <button key={i} className="text-[13px] font-bold text-[#a0a0a0]">
              {i + 1}
            </button>
          ))}
          <ToolButton label="Annota"><NoteIcon /></ToolButton>
        </div>
      </Group>
    </aside>
  );
}

function StatusBar() {
  return (
    <footer className="grid h-[21px] shrink-0 grid-cols-[350px_220px_100px_1fr] border-y border-t-[#8c8c8c] border-b-[#203a5c] bg-[#f0ecec] font-['Open_Sans',sans-serif] text-[11px] leading-5">
      <span className="border-r border-[#d0cccc]" />
      <span className="border-r border-[#d0cccc]" />
      <span className="border-r border-[#d0cccc]" />
      <span className="pl-1">Checksum: 85</span>
    </footer>
  );
}

function App() {
  return (
    <div className="flex h-screen min-h-[700px] min-w-[1100px] flex-col bg-[#f0f0f0] font-['Liberation_Sans',sans-serif] text-[11px] text-black">
      <TitleBar />
      <MenuBar />
      <Toolbars />
      <section className="flex shrink-0 gap-1 border-b border-[#a0a0a0] px-0.5 pt-0.5">
        <LoadedData />
        <Selection />
      </section>
      <main className="flex min-h-0 flex-1 gap-0.5 pt-px">
        <div className="flex min-w-0 flex-1 flex-col pl-0.5">
          <ZoomBar />
          <div className="h-[3px] shrink-0" />
          <ChartArea />
          <Navigation />
        </div>
        <SidePanel />
      </main>
      <StatusBar />
      <div className="flex h-[39px] shrink-0 justify-end border-l border-[#2a6496] bg-white">
        <div className="flex w-[26px] justify-end bg-linear-to-r from-[#1d4170] to-[#1a3c68]">
          <button
            aria-label="Mostra desktop"
            className="w-3.5 border border-[#7f93ad] bg-linear-to-b from-[#34506f] via-[#123560] to-[#20588f]"
          />
        </div>
      </div>
    </div>
  );
}

export default App;
